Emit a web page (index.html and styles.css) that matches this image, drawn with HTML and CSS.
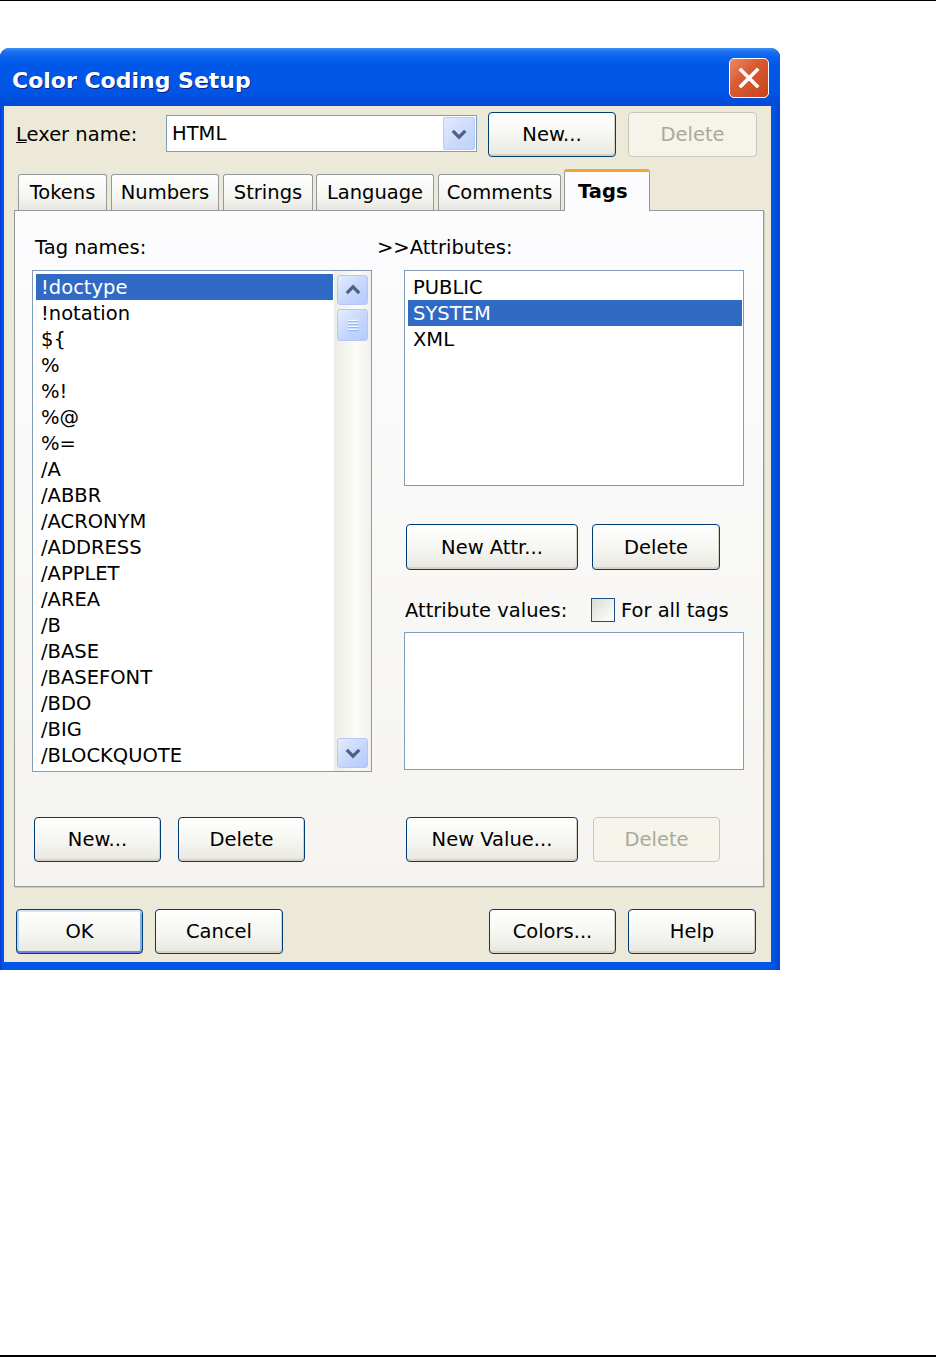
FILE: index.html
```html
<!DOCTYPE html>
<html lang="en">
<head>
    <meta charset="UTF-8">
    <title>Color Coding Setup</title>
    <link rel="stylesheet" href="styles.css">
</head>
<body>
    <div class="page">
        <div class="window">
            <div class="titlebar">
                <span class="title">Color Coding Setup</span>
                <div class="close-btn">
                    <svg width="24" height="24" viewBox="0 0 24 24"><path d="M4 4 L20 20 M20 4 L4 20" stroke="#fff" stroke-width="3.6" stroke-linecap="square"/></svg>
                </div>
            </div>

            <div class="client">
                <!-- lexer selection -->
                <div class="lexer-row">
                    <label class="lexer-label"><u>L</u>exer name:</label>
                    <div class="combo">
                        <span class="combo-text">HTML</span>
                        <span class="combo-btn">
                            <svg width="20" height="20" viewBox="0 0 16 16"><path d="M3 5.5 L8 10.5 L13 5.5" fill="none" stroke="#4d6185" stroke-width="2.6"/></svg>
                        </span>
                    </div>
                    <button class="btn btn-new">New...</button>
                    <button class="btn btn-disabled btn-del">Delete</button>
                </div>

                <div class="tabs">
                    <div class="tab tab-tokens">Tokens</div>
                    <div class="tab tab-numbers">Numbers</div>
                    <div class="tab tab-strings">Strings</div>
                    <div class="tab tab-language">Language</div>
                    <div class="tab tab-comments">Comments</div>
                    <div class="tab tab-active">Tags</div>
                </div>

                <div class="panel">
                    <div class="col-left">
                        <div class="field-label">Tag names:</div>
                        <div class="listbox tag-list">
                            <div class="items">
                                <div class="item selected">!doctype</div>
                                <div class="item">!notation</div>
                                <div class="item">${</div>
                                <div class="item">%</div>
                                <div class="item">%!</div>
                                <div class="item">%@</div>
                                <div class="item">%=</div>
                                <div class="item">/A</div>
                                <div class="item">/ABBR</div>
                                <div class="item">/ACRONYM</div>
                                <div class="item">/ADDRESS</div>
                                <div class="item">/APPLET</div>
                                <div class="item">/AREA</div>
                                <div class="item">/B</div>
                                <div class="item">/BASE</div>
                                <div class="item">/BASEFONT</div>
                                <div class="item">/BDO</div>
                                <div class="item">/BIG</div>
                                <div class="item">/BLOCKQUOTE</div>
                            </div>
                            <div class="scrollbar">
                                <div class="sb-btn">
                                    <svg width="20" height="20" viewBox="0 0 16 16"><path d="M3 10.5 L8 5.5 L13 10.5" fill="none" stroke="#4d6185" stroke-width="2.6"/></svg>
                                </div>
                                <div class="sb-thumb">
                                    <svg width="14" height="18" viewBox="0 0 14 18"><path d="M2 4.5 H12 M2 7.5 H12 M2 10.5 H12 M2 13.5 H12" stroke="#f4f8ff" stroke-width="1.4"/><path d="M2 5.6 H12 M2 8.6 H12 M2 11.6 H12 M2 14.6 H12" stroke="#8cb0f8" stroke-width="1"/></svg>
                                </div>
                                <div class="sb-track"></div>
                                <div class="sb-btn">
                                    <svg width="20" height="20" viewBox="0 0 16 16"><path d="M3 5.5 L8 10.5 L13 5.5" fill="none" stroke="#4d6185" stroke-width="2.6"/></svg>
                                </div>
                            </div>
                        </div>
                        <div class="btn-row">
                            <button class="btn">New...</button>
                            <button class="btn">Delete</button>
                        </div>
                    </div>

                    <div class="col-right">
                        <div class="field-label">&gt;&gt;Attributes:</div>
                        <div class="listbox attr-list">
                            <div class="items">
                                <div class="item">PUBLIC</div>
                                <div class="item selected">SYSTEM</div>
                                <div class="item">XML</div>
                            </div>
                        </div>
                        <div class="btn-row attr-btns">
                            <button class="btn btn-wide">New Attr...</button>
                            <button class="btn">Delete</button>
                        </div>
                        <div class="values-row">
                            <span class="values-label">Attribute values:</span>
                            <span class="checkbox"></span>
                            <span class="check-text">For all tags</span>
                        </div>
                        <div class="listbox values-list"></div>
                        <div class="btn-row value-btns">
                            <button class="btn btn-wide">New Value...</button>
                            <button class="btn btn-disabled">Delete</button>
                        </div>
                    </div>
                </div>

                <div class="bottom-row">
                    <div class="btn-group">
                        <button class="btn btn-default">OK</button>
                        <button class="btn">Cancel</button>
                    </div>
                    <div class="btn-group">
                        <button class="btn">Colors...</button>
                        <button class="btn">Help</button>
                    </div>
                </div>
            </div>
        </div>
    </div>
</body>
</html>
```

FILE: styles.css
```css
body {
    margin: 0;
    background: #fff;
    font-family: "DejaVu Sans", Verdana, sans-serif;
    font-size: 19.5px;
    color: #000;
}
.page {
    height: 1357px;
    box-sizing: border-box;
    border-top: 1px solid #000;
    border-bottom: 2px solid #000;
    padding-top: 47px;
}
.window {
    width: 780px;
    height: 922px;
    box-sizing: border-box;
    border-radius: 9px 9px 0 0;
    background: linear-gradient(90deg, #0831d9 0, #0055e5 2px, #0055e5 774px, #0d3fd0 780px);
    display: flex;
    flex-direction: column;
    overflow: hidden;
}
.titlebar {
    height: 58px;
    flex: none;
    box-sizing: border-box;
    display: flex;
    align-items: center;
    justify-content: space-between;
    padding: 2px 11px 0 12px;
    background: linear-gradient(#3c8ff5 0, #1a6ef0 4px, #0862ec 10px, #0058e8 30%, #0055e5 75%, #0049d6 100%);
}
.title {
    color: #fff;
    font-weight: bold;
    font-size: 22px;
    padding-top: 4px;
    text-shadow: 1px 1px 0 #0b1f8c;
}
.close-btn {
    width: 40px;
    height: 40px;
    box-sizing: border-box;
    border: 1.5px solid #fff;
    border-radius: 5px;
    background: linear-gradient(135deg, #ec8a68, #d95b32 40%, #c8431b);
    display: flex;
    align-items: center;
    justify-content: center;
}
.client {
    flex: 1;
    margin: 0 9px 8px 4px;
    background: #ece9d8;
    padding: 0 7px 0 10px;
    display: flex;
    flex-direction: column;
}
.lexer-row {
    display: flex;
    align-items: flex-start;
    height: 51px;
    padding-top: 6px;
    margin-left: 2px;
}
.lexer-label {
    width: 150px;
    line-height: 45px;
}
.combo {
    margin-top: 3px;
    width: 311px;
    height: 37px;
    box-sizing: border-box;
    border: 1px solid #7f9db9;
    background: #fff;
    display: flex;
    justify-content: space-between;
}
.combo-text {
    padding-left: 5px;
    line-height: 35px;
}
.combo-btn {
    width: 32px;
    margin: 1px 1px 1px 0;
    box-sizing: border-box;
    border: 1px solid #b6cbf7;
    border-radius: 2px;
    background: linear-gradient(135deg, #e0e9fe, #bcd0fa);
    display: flex;
    align-items: center;
    justify-content: center;
}
.btn {
    width: 128px;
    height: 45px;
    box-sizing: border-box;
    border: 1px solid #003c74;
    border-radius: 4px;
    background: linear-gradient(#ffffff, #f5f5f1 55%, #e8e7e0);
    box-shadow: inset -1px -2px 0 #d8d3c6;
    font-family: inherit;
    font-size: 19.5px;
    color: #000;
    padding: 0;
}
.btn-wide {
    width: 172px;
}
.btn-disabled {
    border-color: #c9c7ba;
    color: #aca899;
    background: #f5f4ea;
    box-shadow: none;
}
.btn-default {
    box-shadow: inset 0 2px 0 #cee7ff, inset 0 -2px 0 #6982ee, inset 2px 0 0 #bcd4f6, inset -2px 0 0 #89ade4;
}
.btn-new {
    margin-left: 11px;
}
.btn-del {
    margin-left: 12px;
    width: 129px;
}
.tabs {
    display: flex;
    align-items: flex-end;
    height: 42px;
    margin: 6px 0 -1px 4px;
    position: relative;
    z-index: 1;
}
.tab {
    height: 36px;
    margin-bottom: 1px;
    margin-right: 4px;
    box-sizing: border-box;
    border: 1px solid #919b9c;
    border-bottom: none;
    border-radius: 3px 3px 0 0;
    background: linear-gradient(#ffffff, #f3f3ef 70%, #e6e5df);
    text-align: center;
    line-height: 36px;
    white-space: nowrap;
}
.tab-tokens { width: 89px; }
.tab-numbers { width: 108px; }
.tab-strings { width: 90px; margin-right: 3px; }
.tab-language { width: 118px; }
.tab-comments { width: 123px; margin-right: 3px; }
.tab-active {
    width: 86px;
    height: 42px;
    margin-bottom: 0;
    border-top: 3px solid #f6a531;
    background: #fcfcfe;
    font-weight: bold;
    text-align: left;
    padding-left: 13px;
    line-height: 40px;
}
.panel {
    width: 750px;
    height: 677px;
    box-sizing: border-box;
    border: 1px solid #919b9c;
    background: linear-gradient(#fcfcfe, #f5f4f0);
    box-shadow: 1px 1px 0 #d0cebf;
    display: flex;
    padding-left: 17px;
}
.col-left {
    width: 340px;
    padding-top: 26px;
}
.col-right {
    width: 370px;
    margin-left: 5px;
    padding-top: 26px;
}
.field-label {
    height: 22px;
    line-height: 22px;
    margin-bottom: 11px;
}
.col-left .field-label {
    margin-left: 3px;
}
.listbox {
    width: 340px;
    box-sizing: border-box;
    border: 1px solid #7f9db9;
    background: #fff;
    display: flex;
    overflow: hidden;
}
.col-right .listbox {
    margin-left: 27px;
}
.tag-list {
    height: 502px;
}
.attr-list {
    height: 216px;
}
.values-list {
    height: 138px;
    margin-top: 9px;
}
.items {
    flex: 1;
    padding: 3px 1px 3px 3px;
}
.item {
    height: 26px;
    line-height: 27px;
    padding-left: 5px;
    white-space: nowrap;
}
.item.selected {
    background: #316ac5;
    color: #fff;
}
.scrollbar {
    width: 37px;
    box-sizing: border-box;
    padding: 4px 3px 3px 3px;
    background: linear-gradient(90deg, #eeede5, #fbfbf8 60%, #f3f1ec);
    display: flex;
    flex-direction: column;
}
.sb-btn, .sb-thumb {
    height: 30px;
    box-sizing: border-box;
    border: 1px solid #b4c8f6;
    border-radius: 3px;
    background: linear-gradient(135deg, #e4ecfe, #c3d5fc 60%, #b5cbfa);
    display: flex;
    align-items: center;
    justify-content: center;
}
.sb-thumb {
    height: 32px;
    margin-top: 4px;
}
.sb-track {
    flex: 1;
}
.btn-row {
    display: flex;
    gap: 17px;
    margin-top: 45px;
    margin-left: 2px;
}
.attr-btns {
    margin-top: 38px;
    margin-left: 29px;
    gap: 14px;
}
.attr-btns .btn {
    height: 46px;
}
.value-btns {
    margin-top: 47px;
    margin-left: 29px;
    gap: 15px;
}
.value-btns .btn-disabled {
    width: 127px;
}
.col-left .btn {
    width: 127px;
}
.values-row {
    display: flex;
    align-items: center;
    height: 26px;
    margin-top: 27px;
    margin-left: 28px;
}
.values-label {
    width: 186px;
}
.checkbox {
    width: 24px;
    height: 24px;
    box-sizing: border-box;
    border: 1px solid #1c5180;
    background: linear-gradient(135deg, #dcdbd5, #ffffff);
}
.check-text {
    margin-left: 6px;
}
.bottom-row {
    display: flex;
    justify-content: space-between;
    margin: 22px 8px 0 2px;
}
.btn-group {
    display: flex;
    gap: 12px;
}
.btn-group .btn:first-child {
    width: 127px;
}
```
